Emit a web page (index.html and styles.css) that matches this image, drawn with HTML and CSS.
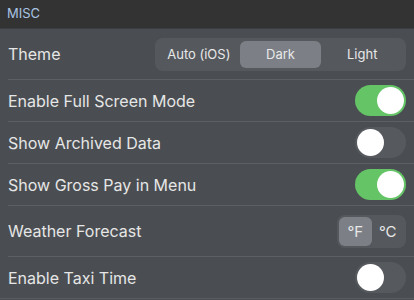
FILE: index.html
```html
<!DOCTYPE html>
<html lang="en">
<head>
  <meta charset="UTF-8" />
  <title>Settings</title>
  <link rel="stylesheet" href="styles.css">
</head>
<body>
  <!-- section header -->
  <div class="section-header">MISC</div>

  <div class="group">
    <div class="row row-tall">
      <span class="label">Theme</span>
      <div class="segmented theme-seg">
        <span class="seg">Auto (iOS)</span>
        <span class="seg selected">Dark</span>
        <span class="seg">Light</span>
      </div>
    </div>

    <div class="row">
      <span class="label">Enable Full Screen Mode</span>
      <span class="switch on"><span class="knob"></span></span>
    </div>

    <div class="row">
      <span class="label">Show Archived Data</span>
      <span class="switch"><span class="knob"></span></span>
    </div>

    <div class="row">
      <span class="label">Show Gross Pay in Menu</span>
      <span class="switch on"><span class="knob"></span></span>
    </div>

    <div class="row row-tall">
      <span class="label">Weather Forecast</span>
      <div class="segmented temp-seg">
        <span class="seg selected">°F</span>
        <span class="seg">°C</span>
      </div>
    </div>

    <div class="row">
      <span class="label">Enable Taxi Time</span>
      <span class="switch"><span class="knob"></span></span>
    </div>
  </div>
</body>
</html>
```

FILE: styles.css
```css
body {
  margin: 0;
  font-family: 'Inter', 'Noto Sans', sans-serif;
  background-color: #4a4e52;
  color: #e6e6e6;
}

.section-header {
  height: 29px;
  padding: 5px 7px 0;
  box-sizing: border-box;
  background-color: #333333;
  border-bottom: 1px solid #3c3f42;
  color: #a9c3e3;
  font-size: 13px;
}

.group {
  background-color: #4a4e52;
  border-bottom: 1px solid #5a5e62;
}

.row {
  height: 41px;
  margin-left: 8px;
  padding-right: 8px;
  display: flex;
  align-items: center;
  justify-content: space-between;
  border-bottom: 1px solid #5c6064;
}

.row:last-child {
  border-bottom: none;
}

.row-tall {
  height: 50px;
}

.label {
  font-size: 16px;
}

/* segmented control */
.segmented {
  display: flex;
  height: 33px;
  padding: 3px;
  box-sizing: border-box;
  border-radius: 8px;
  background-color: #55595e;
}

.seg {
  display: flex;
  align-items: center;
  justify-content: center;
  border-radius: 6px;
  font-size: 13px;
  color: #e8e8e8;
}

.theme-seg {
  width: 251px;
}

.theme-seg .seg {
  flex: 1;
}

.temp-seg {
  width: 69px;
  padding: 2px;
}

.temp-seg .seg {
  flex: 1;
  font-size: 15px;
}

.seg.selected {
  background-color: #7c8086;
}

/* toggle switch */
.switch {
  width: 51px;
  height: 31px;
  border-radius: 16px;
  background-color: #56595e;
  display: flex;
  align-items: center;
  padding: 2px;
  box-sizing: border-box;
}

.switch.on {
  background-color: #64c466;
  justify-content: flex-end;
}

.knob {
  width: 27px;
  height: 27px;
  border-radius: 50%;
  background-color: #ffffff;
}
```
